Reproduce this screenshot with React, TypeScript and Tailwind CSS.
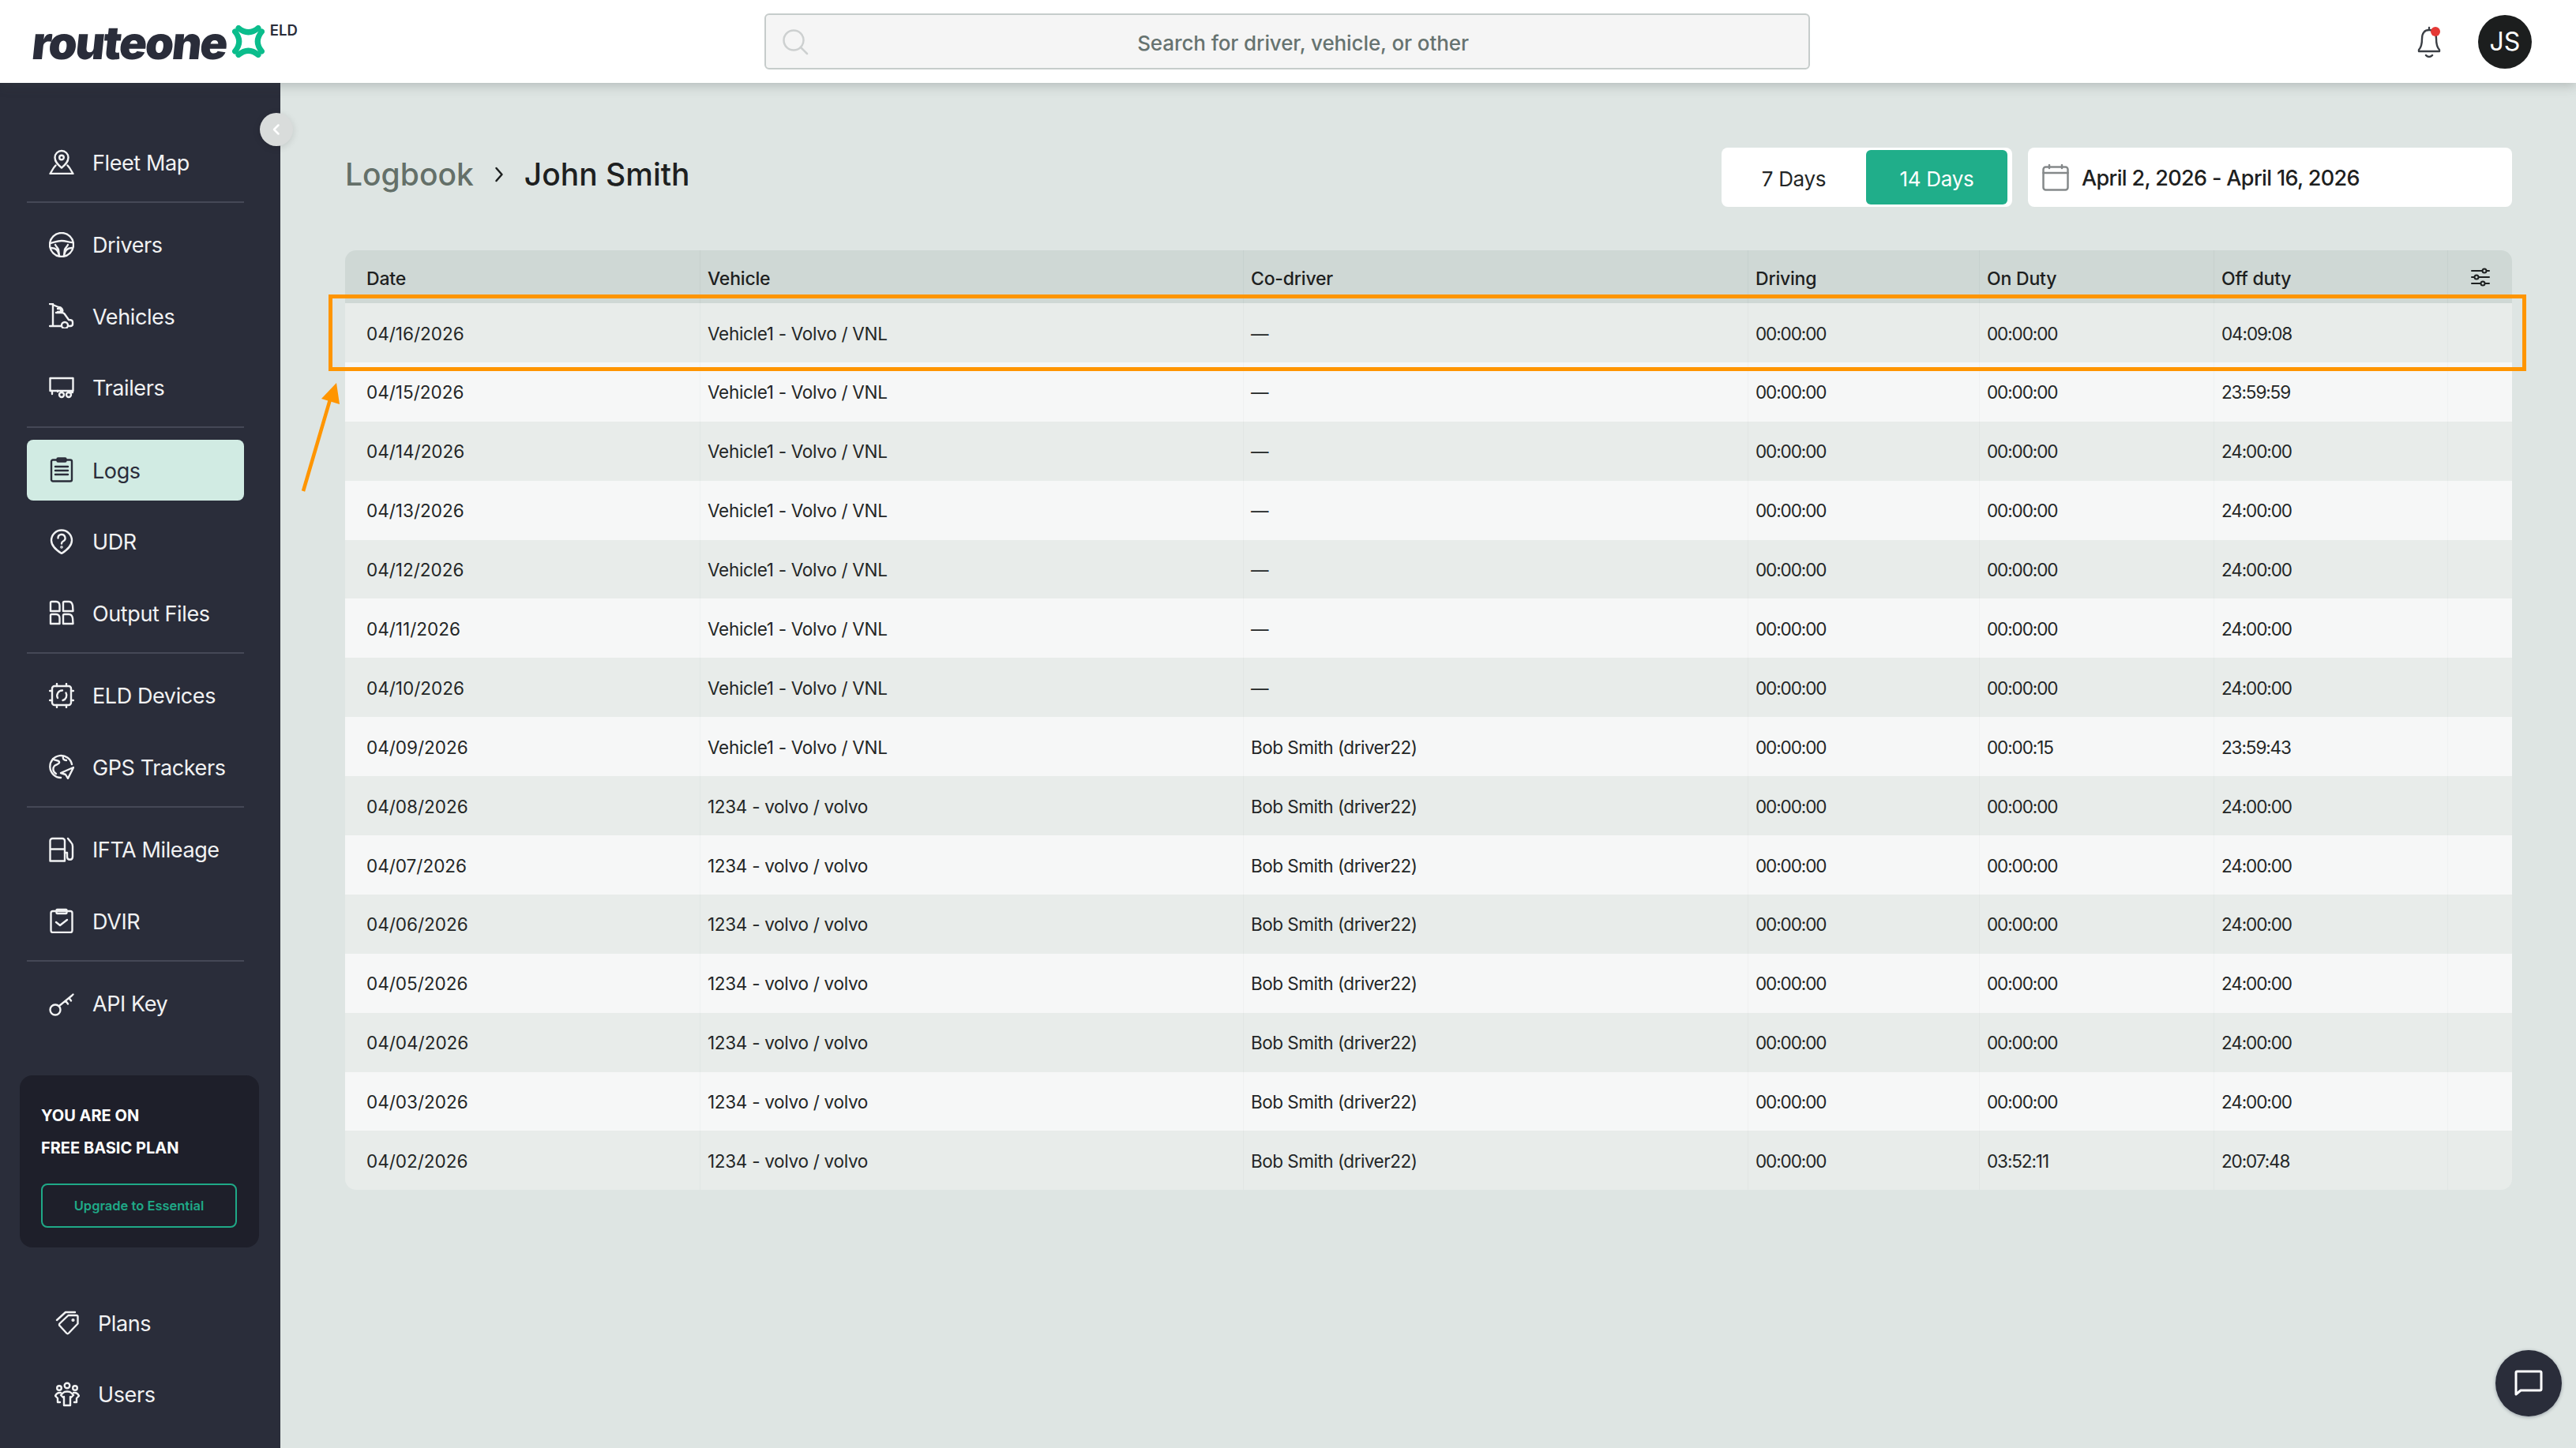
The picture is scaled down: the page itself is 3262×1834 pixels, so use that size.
import React from "react";

const S = ({ children, className = "w-8 h-8" }: { children: React.ReactNode; className?: string }) => (
  <svg viewBox="0 0 32 32" fill="none" stroke="currentColor" strokeWidth="2.4" strokeLinecap="round" strokeLinejoin="round" className={"shrink-0 " + className}>
    {children}
  </svg>
);

const icons: Record<string, React.ReactNode> = {
  fleet: (<><path d="M16 23.5C12 20 7.5 16.5 7.5 10.5a8.5 8.5 0 0 1 17 0C24.500 16.500 20 20 16 23.500Z" /><circle cx="16" cy="10.500" r="2.800" /><path d="M8.500 20.500 6 23.500 1.500 31h29L26 23.500l-2.500-3" /></>),
  wheel: (<><circle cx="16" cy="16" r="15" /><path d="M2 14c5-1 8-3 14-3s9 2 14 2" /><path d="M3 20c5 0 9 2 10 10M29 20c-5 0-9 2-10 10M13 30l-1-8c-1-2-3-4-4-6M19 30l1-8c1-2 3-4 4-6" /></>),
  truck: (<><path d="M1 1h4v28M1 29h14M25 29c3 0 5 0 5-2v-3c0-2-2-3-5-3l-5-7c-1-2-3-2-5-2H9" /><path d="M5 2l7 3c4 0 6 3 5 6" /><path d="M11 7h4v4h-4" /><circle cx="20" cy="28" r="4" /></>),
  trailer: (<><rect x="1.500" y="4" width="29" height="16" /><path d="M4 20v4M11 20v1M25 22h5" /><circle cx="16" cy="25" r="3" /><circle cx="25" cy="25" r="3" /></>),
  logs: (<><rect x="3" y="3.500" width="26" height="27" rx="2" /><rect x="10.500" y="1.500" width="11" height="4" rx="1" /><path d="M8 12h16M8 17h16M8 22h16" /></>),
  udr: (<><path d="M16 31C10 27 3 22 3 14.500a13 13 0 0 1 26 0C29 22 22 27 16 31Z" /><path d="M11.500 11.500a4.500 4.500 0 1 1 6.500 4c-1.500.8-2 1.500-2 3" /><circle cx="16" cy="23" r=".6" /></>),
  output: (<><path d="M2 14V3.500A1.500 1.500 0 0 1 3.500 2H9c3 0 4.500 2 4.500 5v7ZM18 14V3.500A1.500 1.500 0 0 1 19.500 2H25c3 0 4.500 2 5 5l.5 7ZM2 30V19.500A1.500 1.500 0 0 1 3.500 18H9c3 0 4.500 2 4.500 5v7ZM18 30V19.500A1.500 1.500 0 0 1 19.500 18H25c3 0 4.500 2 5 5l.5 7Z" /></>),
  eld: (<><rect x="4" y="4" width="24" height="24" rx="3" /><path d="M10 1v3M22 1v3M10 28v3M22 28v3M1 10h3M1 22h3M28 10h3M28 22h3" /><path d="M11 19a6.500 6.500 0 0 1 6-9.500M21.500 12.500a6.500 6.500 0 0 1-4 9.500" /></>),
  gps: (<><path d="M15 30A14 14 0 1 1 29 13" /><path d="M5 6c2 3 7 1 8 4s-4 3-6 5-3 7 2 10M18 3c-1 3 1 5 4 5" /><path d="M31 17 15 24l6 2 3 5Z" /></>),
  fuel: (<><path d="M1.500 30.500V5a3 3 0 0 1 3-3H17a3 3 0 0 1 3 3v25.500ZM1.500 15.500H20" /><path d="M24 2l4 5c1.500 1.500 2 3 2 5v13c0 5-7 5-7 0v-5h-3" /></>),
  dvir: (<><rect x="2.500" y="4" width="27" height="27" rx="2.500" /><rect x="9.500" y="2" width="13" height="5" rx="1" /><path d="M9 18l5 4 9-7" /></>),
  key: (<><circle cx="8" cy="24" r="6.500" /><path d="M13 19 29 6M21 12.500l3 4M25.500 9l2.500 3.500M29 6l1.500-1.500" /></>),
  plans: (<><path d="M3 13 14 3h12l-.2 0M7 17 17.500 7H28a1.500 1.500 0 0 1 1.500 1.500v9L18 29.500a2 2 0 0 1-2.800 0L7 20.500a2 2 0 0 1 0-3.500Z" /><circle cx="23.500" cy="13" r=".9" /></>),
  users: (<><circle cx="16" cy="5" r="3.300" /><circle cx="6" cy="8" r="2.800" /><circle cx="26" cy="8" r="2.800" /><path d="M11 14c2-2 8-2 10 0l3 3-3 3-1-1v11h-8V19l-1 1-3-3Z" /><path d="M8 14H6c-2 0-4 2-5 4l3 3v5h3M24 14h2c2 0 4 2 5 4l-3 3v5h-3" /></>),
};

const NavItem = ({ icon, label, active }: { icon: string; label: string; active?: boolean }) => (
  <div className={"flex h-[77px] w-[275px] items-center gap-[23px] rounded-[8px] pl-[28px] " + (active ? "bg-[#d1ebe3] text-[#2a2d3a]" : "text-[#f1f2f3]")}>
    <S>{icons[icon]}</S>
    <span className="pt-[2px] text-[27px] leading-none tracking-[-0.4px]">{label}</span>
  </div>
);

const Divider = () => <div className="mb-[14.5px] mt-[11px] h-[2px] w-[275px] bg-[#454856]" />;

const Group = ({ children }: { children: React.ReactNode }) => <div className="flex flex-col gap-[13.5px]">{children}</div>;

const Sidebar = () => (
  <aside className="relative flex w-[355px] shrink-0 flex-col bg-[#2a2d3a] pt-[61.5px]">
    <div className="flex flex-col pl-[34px]">
      <Group><NavItem icon="fleet" label="Fleet Map" /></Group>
      <Divider />
      <Group>
        <NavItem icon="wheel" label="Drivers" />
        <NavItem icon="truck" label="Vehicles" />
        <NavItem icon="trailer" label="Trailers" />
      </Group>
      <Divider />
      <Group>
        <NavItem icon="logs" label="Logs" active />
        <NavItem icon="udr" label="UDR" />
        <NavItem icon="output" label="Output Files" />
      </Group>
      <Divider />
      <Group>
        <NavItem icon="eld" label="ELD Devices" />
        <NavItem icon="gps" label="GPS Trackers" />
      </Group>
      <Divider />
      <Group>
        <NavItem icon="fuel" label="IFTA Mileage" />
        <NavItem icon="dvir" label="DVIR" />
      </Group>
      <Divider />
      <Group><NavItem icon="key" label="API Key" /></Group>
    </div>
    <div className="ml-[25px] mt-[53px] flex h-[218px] w-[303px] flex-col rounded-[16px] bg-[#1e1f2a] px-[27px] pt-[31px]">
      <div className="text-[20px] font-bold leading-[41px] text-white">YOU ARE ON<br />FREE BASIC PLAN</div>
      <div className="mt-[24px] flex h-[56px] w-[248px] items-center justify-center rounded-[8px] border-2 border-[#1fa987] text-[16.5px] font-semibold text-[#1fa987]">Upgrade to Essential</div>
    </div>
    <div className="ml-[7px] mt-[56.5px] flex flex-col gap-[13.5px] pl-[34px]">
      <NavItem icon="plans" label="Plans" />
      <NavItem icon="users" label="Users" />
    </div>
    <div className="absolute left-[329px] top-[38px] z-20 flex h-[42px] w-[42px] items-center justify-center rounded-full bg-[#d9dcdb] shadow-[0_2px_10px_rgba(0,0,0,0.12)]">
      <svg viewBox="0 0 16 16" className="h-[16px] w-[16px]" fill="none" stroke="#ffffff" strokeWidth="2.500" strokeLinecap="round" strokeLinejoin="round"><path d="M10.500 2.500 5 8l5.500 5.500" /></svg>
    </div>
  </aside>
);

const Header = () => (
  <header className="relative z-10 flex h-[105px] shrink-0 items-center bg-white pl-[41px] pr-[56px] shadow-[0_3px_14px_rgba(60,70,70,0.28)]">
    <div className="flex w-[927px] shrink-0 items-start">
      <span className="-skew-x-6 pt-[2px] text-[58px] font-black leading-[62px] tracking-[-2.3px] text-[#2a2d3a]">routeone</span>
      <svg viewBox="0 0 41 41" className="ml-[7px] mt-[11px] h-[41px] w-[41px] shrink-0" fill="none" stroke="#0bbd8c" strokeWidth="7" strokeLinecap="round">
        <path d="M8 3.500Q20.500 14 33 3.500M8 37.500Q20.500 27 33 37.500M3.500 8Q14 20.500 3.500 33M37.500 8Q27 20.500 37.500 33" />
      </svg>
      <span className="ml-[7px] mt-[5px] text-[18.500px] font-semibold leading-[24px] text-[#2a2d3a]">ELD</span>
    </div>
    <div className="relative flex h-[71px] w-[1324px] shrink-0 items-center justify-center rounded-[6px] border-2 border-[#c6cccb] bg-[#f5f5f5] pl-[40px] pt-[3px] text-[26px] font-medium tracking-[-0.1px] text-[#667370]">
      <svg viewBox="0 0 34 34" className="absolute left-[20px] top-[17px] h-[34px] w-[34px]" fill="none" stroke="#cdd0d0" strokeWidth="2.500" strokeLinecap="round"><circle cx="15" cy="15" r="12.500" /><path d="m24 24 8 8" /></svg>
      Search for driver, vehicle, or other
    </div>
    <div className="ml-auto flex items-center gap-[47px]">
      <div className="relative h-[40px] w-[30px]">
        <svg viewBox="0 0 30 40" className="h-[40px] w-[30px]" fill="none" stroke="#3b3f45" strokeWidth="2.400" strokeLinejoin="round" strokeLinecap="round">
          <path d="M15 2v3M15 5c-6 0-9 4-9 11 0 7-1 11-4 14v2h26v-2c-3-3-4-7-4-14 0-7-3-11-9-11Z" /><path d="M11 37c2 2.500 6 2.500 8 0" />
        </svg>
        <div className="absolute left-[17px] top-[1px] h-[12px] w-[12px] rounded-full bg-[#e53935]" />
      </div>
      <div className="flex h-[68px] w-[68px] items-center justify-center rounded-full bg-[#1c1e1e] text-[32px] font-normal text-white">JS</div>
    </div>
  </header>
);

const groupA = ["04/16/2026", "04/15/2026", "04/14/2026", "04/13/2026", "04/12/2026", "04/11/2026", "04/10/2026"];
const offA = ["04:09:08", "23:59:59", "24:00:00", "24:00:00", "24:00:00", "24:00:00", "24:00:00"];
const rows = [
  ...groupA.map((d, i) => ({ d, v: "Vehicle1 - Volvo / VNL", c: "—", on: "00:00:00", off: offA[i] })),
  { d: "04/09/2026", v: "Vehicle1 - Volvo / VNL", c: "Bob Smith (driver22)", on: "00:00:15", off: "23:59:43" },
  ...["04/08/2026", "04/07/2026", "04/06/2026", "04/05/2026", "04/04/2026", "04/03/2026"].map((d) => ({ d, v: "1234 - volvo / volvo", c: "Bob Smith (driver22)", on: "00:00:00", off: "24:00:00" })),
  { d: "04/02/2026", v: "1234 - volvo / volvo", c: "Bob Smith (driver22)", on: "03:52:11", off: "20:07:48" },
];

const GRID = "grid grid-cols-[449px_688px_639px_293px_297px_296px_82px]";

const Table = () => (
  <div className="mt-[55px] w-[2744px] overflow-hidden rounded-[14px]">
    <div className={GRID + " h-[67px] bg-[#cfd8d5] text-[23px] font-medium text-[#1d2020]"}>
      {["Date", "Vehicle", "Co-driver", "Driving", "On Duty", "Off duty"].map((h, i) => (
        <div key={h} className={"flex items-center pt-[5px] tracking-[-0.2px] " + (i === 0 ? "pl-[27px]" : "border-l border-[#c7d1ce] pl-[9px]")}>{h}</div>
      ))}
      <div className="flex items-center justify-center border-l border-[#c7d1ce]">
        <svg viewBox="0 0 24 24" className="h-[24px] w-[24px]" fill="none" stroke="#1d2020" strokeWidth="2" strokeLinecap="round"><path d="M1 4h13M20 4h3M1 12h3M10 12h13M1 20h11M18 20h5" /><circle cx="17" cy="4" r="2.500" /><circle cx="7" cy="12" r="2.500" /><circle cx="15" cy="20" r="2.500" /></svg>
      </div>
    </div>
    {rows.map((r, i) => {
      const cell = "flex items-center border-l pl-[9px] pt-[2px] " + (i % 2 === 0 ? "border-[#e1e6e4]" : "border-[#eff1f1]");
      const time = cell + " tracking-[-1.1px]";
      return (
        <div key={r.d} className={GRID + " h-[74.9px] text-[22.500px] text-[#232626] " + (i % 2 === 0 ? "bg-[#e8ecea]" : "bg-[#f6f7f7]")}>
          <div className="flex items-center pl-[27px] pt-[2px]">{r.d}</div>
          <div className={cell + " tracking-[-0.3px]"}>{r.v}</div>
          <div className={cell + " tracking-[-0.5px]"}>{r.c}</div>
          <div className={time}>00:00:00</div>
          <div className={time}>{r.on}</div>
          <div className={time}>{r.off}</div>
          <div className={"border-l " + (i % 2 === 0 ? "border-[#e1e6e4]" : "border-[#eff1f1]")} />
        </div>
      );
    })}
  </div>
);

const Main = () => (
  <main className="relative flex-1 bg-[#dee5e3] pl-[82px] pr-[81px] pt-[82px]">
    <div className="flex h-[75px] items-center">
      <div className="flex items-center pb-[7px]">
        <span className="text-[39px] font-medium text-[#647069]">Logbook</span>
        <svg viewBox="0 0 12 20" className="ml-[26px] h-[20px] w-[12px]" fill="none" stroke="#1d2020" strokeWidth="2.500" strokeLinecap="round" strokeLinejoin="round"><path d="m2.500 2 7 8-7 8" /></svg>
        <span className="ml-[26px] text-[39px] font-medium text-[#1d2020]">John Smith</span>
      </div>
      <div className="ml-auto flex h-[75px] w-[368px] items-center rounded-[8px] bg-white p-[4px] pl-0">
        <div className="flex h-full w-[183px] items-center justify-center pt-[3px] text-[26px] tracking-[-0.3px] text-[#232626]">7 Days</div>
        <div className="flex h-[69px] w-[179px] items-center justify-center rounded-[6px] bg-[#20ae8a] pt-[3px] text-[26px] tracking-[-0.3px] text-white">14 Days</div>
      </div>
      <div className="ml-[20px] flex h-[75px] w-[613px] items-center rounded-[8px] bg-white pl-[18px] text-[27px] font-medium tracking-[-0.65px] text-[#1d2020]">
        <svg viewBox="0 0 34 34" className="h-[34px] w-[34px] shrink-0" fill="none" stroke="#85898a" strokeWidth="2.500" strokeLinecap="round" strokeLinejoin="round"><rect x="1.500" y="3.500" width="31" height="29" rx="3" /><path d="M1.500 11h31M9 1v4M25 1v4" /></svg>
        <span className="ml-[16px] pt-[3px]">April 2, 2026 - April 16, 2026</span>
      </div>
    </div>
    <Table />
    <div className="pointer-events-none absolute left-[61px] top-[268px] h-[97px] w-[2783px] border-[5px] border-[#ff9500]" />
    <svg className="pointer-events-none absolute left-[20px] top-[375px] h-[145px] w-[60px]" viewBox="0 0 60 145" fill="none">
      <path d="M9 142 43 26" stroke="#ff9500" strokeWidth="4.500" />
      <path d="M51 5 32 25l23 7Z" fill="#ff9500" />
    </svg>
    <div className="absolute left-[2805px] top-[1605px] flex h-[84px] w-[84px] items-center justify-center rounded-full bg-[#2a2d3a] shadow-[0_1px_4px_rgba(40,50,70,0.4)]">
      <svg viewBox="0 0 36 34" className="h-[34px] w-[36px]" fill="none" stroke="#ffffff" strokeWidth="3" strokeLinejoin="round" strokeLinecap="round"><path d="M2 31V3.500A1.500 1.500 0 0 1 3.500 2h29A1.500 1.500 0 0 1 34 3.500v21a1.500 1.500 0 0 1-1.500 1.500H8Z" /></svg>
    </div>
  </main>
);

export default function App() {
  return (
    <div className="flex h-[1834px] w-[3262px] flex-col overflow-hidden bg-[#dee5e3] font-['Inter',sans-serif]">
      <Header />
      <div className="flex min-h-0 flex-1">
        <Sidebar />
        <Main />
      </div>
    </div>
  );
}
